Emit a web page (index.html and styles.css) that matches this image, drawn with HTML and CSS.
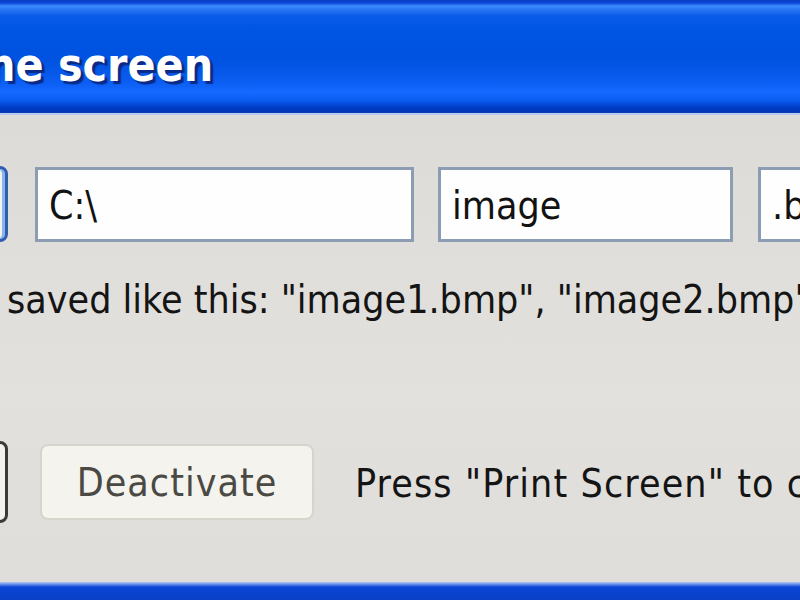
FILE: index.html
```html
<!DOCTYPE html>
<html>
<head>
<meta charset="utf-8">
<link rel="stylesheet" href="styles.css">
</head>
<body>
<div class="window">
  <div class="titlebar"><span class="title">he screen</span></div>
  <div class="content">
    <div class="row inputs">
      <span class="btn-partial focused"></span>
      <span class="field field-path">C:\</span>
      <span class="field field-name">image</span>
      <span class="field field-ext">.bmp</span>
    </div>
    <p class="hint">saved like this: "image1.bmp", "image2.bmp", ...</p>
    <div class="row actions">
      <span class="btn-partial tall"></span>
      <span class="button disabled">Deactivate</span>
      <span class="note">Press "Print Screen" to capture</span>
    </div>
  </div>
  <div class="frame-bottom"></div>
</div>
</body>
</html>
```
FILE: styles.css
```css
html, body {
  margin: 0;
  padding: 0;
  width: 800px;
  height: 600px;
  overflow: hidden;
}
body {
  font-family: "DejaVu Sans Condensed", "DejaVu Sans", Tahoma, sans-serif;
  font-stretch: condensed;
  background: #dfded9;
}
.window {
  width: 800px;
  height: 600px;
  display: flex;
  flex-direction: column;
  overflow: hidden;
}
.titlebar {
  flex: none;
  box-sizing: border-box;
  height: 115px;
  padding-top: 38px;
  background: linear-gradient(to bottom,
    #0a3fc4 0px, #0a47d6 3px, #3d8cff 6px, #2a78f5 9px, #0a5ae8 16px,
    #0055e3 30px, #0052e0 60px, #0a5cf0 80px, #1569ff 92px, #0c5ef2 100px,
    #003ec9 107px, #0035b8 111px, #0a3fb5 113px);
  border-bottom: 2px solid #b9c8f0;
  display: flex;
  align-items: flex-start;
}
.title {
  margin-left: -14px;
  color: #fff;
  font-weight: bold;
  font-size: 46px;
  line-height: 54px;
  text-shadow: 3px 3px 1px #0a2a85;
  white-space: nowrap;
}
.content {
  flex: 1;
  overflow: hidden;
  background: linear-gradient(to bottom, #dcdbd7, #e2e1dd 60%, #deddda);
}
.row {
  display: flex;
  align-items: center;
  white-space: nowrap;
}
.inputs {
  margin-top: 51px;
  height: 76px;
}
.btn-partial {
  flex: none;
  width: 40px;
  margin-left: -32px;
  box-sizing: border-box;
  height: 76px;
  border: 3px solid #3a3a3a;
  border-radius: 8px;
  background: #f3f2ee;
}
.btn-partial.focused {
  border-color: #2d5fb0;
  box-shadow: inset -3px 0 0 #8db4ea;
}
.btn-partial.tall {
  height: 82px;
}
.field {
  flex: none;
  box-sizing: border-box;
  height: 75px;
  background: #fefefe;
  border: 3px solid #8b9cb3;
  font-size: 39px;
  color: #121212;
  padding: 3px 0 0 11px;
  line-height: 66px;
  overflow: hidden;
}
.field-path {
  margin-left: 27px;
  width: 379px;
}
.field-name {
  margin-left: 24px;
  width: 295px;
}
.field-ext {
  margin-left: 25px;
  width: 60px;
}
.hint {
  margin: 35px 0 0 7px;
  font-size: 39px;
  line-height: 46px;
  color: #141414;
  white-space: nowrap;
}
.actions {
  margin-top: 118px;
  height: 82px;
}
.button {
  flex: none;
  box-sizing: border-box;
  margin-left: 32px;
  width: 274px;
  height: 76px;
  padding-top: 1px;
  border: 2px solid #d6d4cb;
  border-radius: 8px;
  background: #f4f3ee;
  font-size: 39px;
  letter-spacing: 1px;
  color: #4a4944;
  display: flex;
  align-items: center;
  justify-content: center;
}
.note {
  margin-left: 41px;
  padding-top: 2px;
  font-size: 39px;
  letter-spacing: 1.1px;
  color: #141414;
}
.frame-bottom {
  flex: none;
  height: 18px;
  background: linear-gradient(to bottom, #b6c8f2 0px, #6e96ea 2px, #0a45d4 5px, #0a3fc6 18px);
}
```
